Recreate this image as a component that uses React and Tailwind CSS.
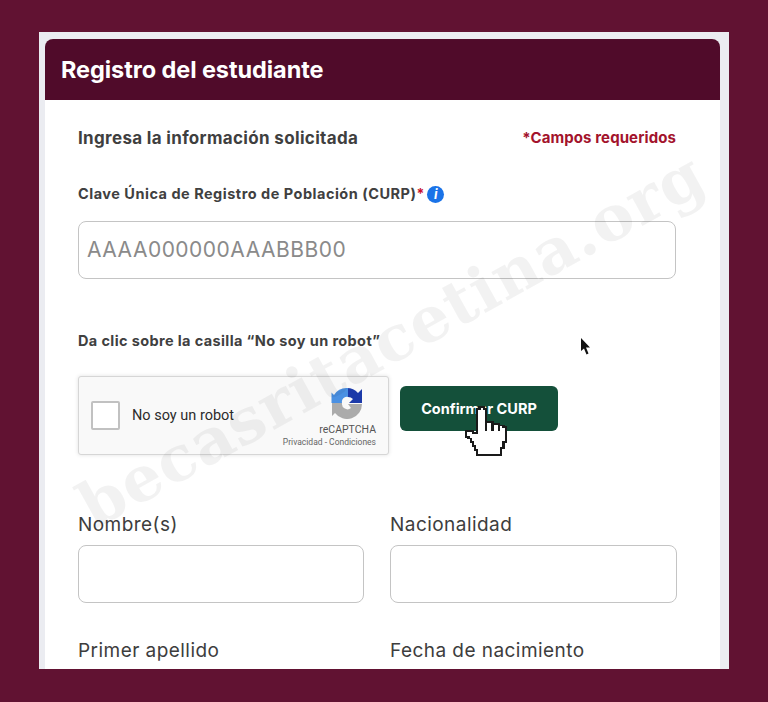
const font = "font-['Inter','Liberation_Sans',sans-serif]"

function ReCaptchaLogo() {
  return (
    <svg width="32" height="32" viewBox="0 0 32 32" className="block">
      <path d="M16 1 A15 15 0 0 1 27 6 L31 2 L31 16 L18 16 L22 12 A7 7 0 0 0 17 10 Z" fill="#1c3aa9" />
      <path d="M17 1 A15 15 0 0 0 3 8 L0.5 5.5 L0.5 16 L11 16 A5 5 0 0 1 17 10 Z" fill="#4a90e2" />
      <path d="M1 16 L11 16 A5.5 5.5 0 0 0 20 21 L17 17 L31 17 A15 15 0 0 1 4 26 L1 29 Z" fill="#ababab" />
    </svg>
  )
}

function HandCursor() {
  return (
    <svg width="48" height="52" viewBox="0 0 22 28" preserveAspectRatio="none" className="block" shapeRendering="crispEdges">
      <path
        d="M8 1 h2 v1 h1 v7 h3 v1 h3 v1 h2 v1 h1 v8 h-1 v3 h-1 v4 H7 v-3 H6 v-2 H5 v-2 H4 v-2 H3 v-1 H2 v-3 h3 v1 h2 V2 h1 Z"
        fill="#fff"
        stroke="#1a1a1a"
        strokeWidth="1"
      />
      <path d="M11 9 v5 M14 10 v4 M17 11 v3" stroke="#1a1a1a" strokeWidth="1" fill="none" />
    </svg>
  )
}

function Field({ label, className }) {
  return (
    <div className={className}>
      <p className="text-[19px] leading-[22px] tracking-[0.45px] text-[#3d3d3d]">{label}</p>
      <div className="mt-[9px] h-[58px] rounded-[8px] border border-[#c4c4c4] bg-white" />
    </div>
  )
}

export default function App() {
  return (
    <div className={`${font} h-[702px] overflow-hidden bg-[#611232] px-[39px] pt-[32px]`}>
      <div className="h-[637px] overflow-hidden bg-[#ebecf1] pl-[6px] pr-[9px] pt-[7px]">
        <div className="relative h-full overflow-hidden rounded-t-[8px] bg-white">
          <div className="flex h-[61px] items-center bg-[#500b2a] pl-[16px]">
            <h1 className="text-[23.5px] font-bold tracking-[-0.07px] text-white">Registro del estudiante</h1>
          </div>

          <div className="pl-[33px] pr-[44px]">
            <div className="flex items-center justify-between pt-[28px]">
              <h2 className="text-[17px] font-bold leading-[20px] tracking-[0.33px] text-[#3f3f3f]">
                Ingresa la información solicitada
              </h2>
              <span className="text-[15px] font-bold leading-[20px] tracking-[0.1px] text-[#a3132c]">*Campos requeridos</span>
            </div>

            <div className="mt-[36px] flex items-center">
              <span className="text-[14.5px] font-bold leading-[20px] tracking-[0.5px] text-[#404040]">
                Clave Única de Registro de Población (CURP)
              </span>
              <span className="text-[14px] font-bold leading-[20px] text-[#c8102e]">*</span>
              <span className="ml-[3px] flex h-[17px] w-[17px] items-center justify-center rounded-full bg-[#1a73e8] text-[13px] font-bold italic leading-none text-white">
                i
              </span>
            </div>

            <div className="mt-[17px] flex h-[58px] items-center rounded-[8px] border border-[#c4c4c4] bg-white pl-[8px] text-[21px] tracking-[0.5px] text-[#8a8a8a]">
              AAAA000000AAABBB00
            </div>

            <p className="mt-[52px] text-[14.5px] font-bold leading-[20px] tracking-[0.38px] text-[#404040]">
              Da clic sobre la casilla “No soy un robot”
            </p>

            <div className="mt-[25px] flex items-start">
              <div className="flex h-[79px] w-[311px] items-center rounded-[3px] border border-[#d6d6d6] bg-[#f9f9f9] pl-[12px] pr-[12px] shadow-[0_0_4px_rgba(0,0,0,0.12)] font-['Roboto',sans-serif]">
                <div className="h-[29px] w-[29px] rounded-[2px] border-2 border-[#c1c1c1] bg-white" />
                <span className="ml-[12px] flex-1 text-[14.5px] text-[#2c2c2c]">No soy un robot</span>
                <div className="flex flex-col items-end pt-[3px]">
                  <div className="mr-[13px]">
                    <ReCaptchaLogo />
                  </div>
                  <span className="mt-[4px] text-[10.5px] leading-[13px] text-[#555]">reCAPTCHA</span>
                  <span className="mt-[1px] text-[8.5px] leading-[11px] text-[#666]">Privacidad - Condiciones</span>
                </div>
              </div>
              <div className="relative ml-[11px] mt-[10px]">
                <button className="h-[45px] w-[158px] rounded-[6px] bg-[#14503a] text-[14.5px] font-bold text-white">
                  Confirmar CURP
                </button>
                <div className="absolute left-[62px] top-[19px]">
                  <HandCursor />
                </div>
              </div>
            </div>

            <div className="mt-[59px] grid grid-cols-[286px_287px] gap-x-[26px] gap-y-[37px]">
              <Field label="Nombre(s)" />
              <Field label="Nacionalidad" />
              <Field label="Primer apellido" />
              <Field label="Fecha de nacimiento" />
            </div>
          </div>

          {/* mouse arrow */}
          <svg width="12" height="18" viewBox="0 0 12 18" className="absolute left-[535px] top-[299px]">
            <path d="M1 0 L1 13 L4 10.5 L6.5 16.5 L8.5 15.5 L6 9.5 L10 9.5 Z" fill="#111" />
          </svg>

          {/* watermark */}
          <div className="pointer-events-none absolute left-[-4px] top-[270px] w-[675px] origin-center -rotate-[29deg] whitespace-nowrap text-center font-['DejaVu_Serif',serif] text-[63px] font-bold leading-[76px] tracking-[1px] text-black/[0.05]">
            becasritacetina.org
          </div>
        </div>
      </div>
    </div>
  )
}
